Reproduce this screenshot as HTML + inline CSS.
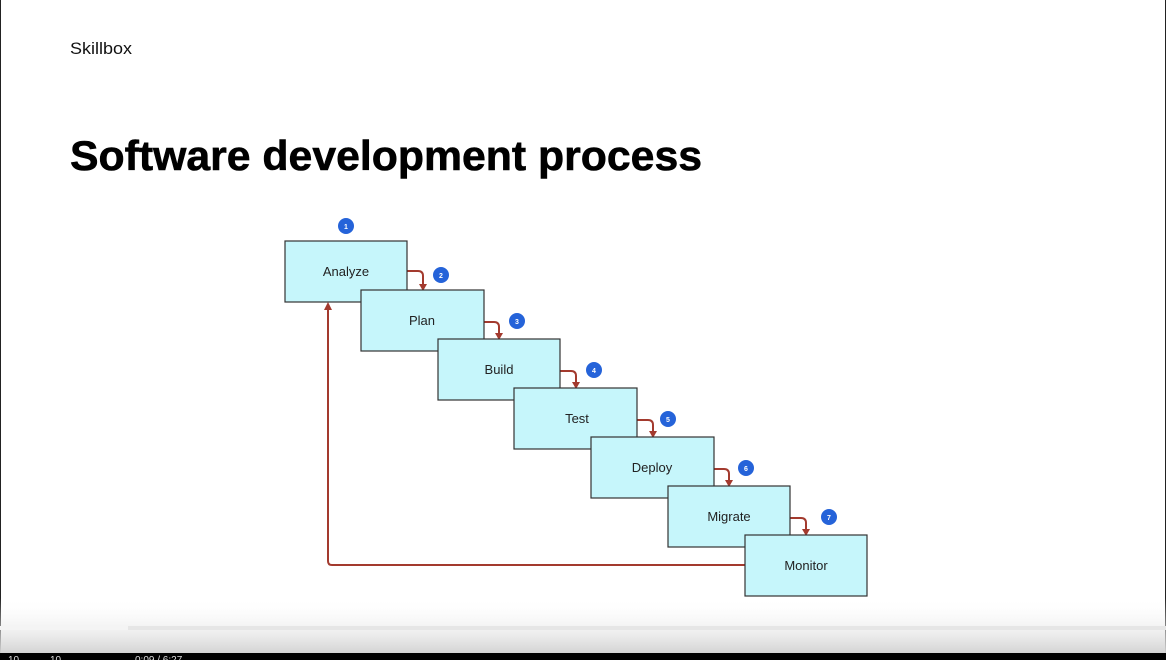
<!DOCTYPE html>
<html><head><style>
html,body{margin:0;padding:0;}
body{width:1166px;height:660px;overflow:hidden;background:#fff;position:relative;font-family:"Liberation Sans",sans-serif;}
</style></head><body>
<svg width="1166" height="660" style="position:absolute;left:0;top:0" xmlns="http://www.w3.org/2000/svg">
<defs>
<linearGradient id="g" x1="0" y1="0" x2="0" y2="1">
<stop offset="0" stop-color="#ffffff" stop-opacity="0"/>
<stop offset="1" stop-color="#d2d2d2"/>
</linearGradient>
</defs>
<rect x="0" y="0" width="1166" height="660" fill="#fff"/>
<line x1="0.5" y1="0" x2="0.5" y2="660" stroke="#222"/>
<line x1="1165.5" y1="0" x2="1165.5" y2="660" stroke="#222"/>
<text x="70" y="54" font-size="17" fill="#111" textLength="62" lengthAdjust="spacingAndGlyphs">Skillbox</text>
<text x="70" y="170" font-size="42" font-weight="bold" fill="#000" stroke="#000" stroke-width="0.6" textLength="632" lengthAdjust="spacingAndGlyphs">Software development process</text>
<g stroke="#a33a2e" stroke-width="2" fill="none">
<path d="M407,271 H418 Q423,271 423,276 V287"/>
<path d="M484,322 H494 Q499,322 499,327 V336"/>
<path d="M560,371 H571 Q576,371 576,376 V385"/>
<path d="M637,420 H648 Q653,420 653,425 V434"/>
<path d="M714,469 H724 Q729,469 729,474 V483"/>
<path d="M790,518 H801 Q806,518 806,523 V532"/>
<path d="M745,565 H332 Q328,565 328,561 V307"/>
</g>
<g fill="#a33a2e">
<path d="M419,284 L427,284 L423,291 z"/>
<path d="M495,333 L503,333 L499,340 z"/>
<path d="M572,382 L580,382 L576,389 z"/>
<path d="M649,431 L657,431 L653,438 z"/>
<path d="M725,480 L733,480 L729,487 z"/>
<path d="M802,529 L810,529 L806,536 z"/>
<path d="M324,310 L332,310 L328,302 z"/>
</g>
<g stroke="#333" stroke-width="1.2" fill="#c6f6fb">
<rect x="285" y="241" width="122" height="61"/>
<rect x="361" y="290" width="123" height="61"/>
<rect x="438" y="339" width="122" height="61"/>
<rect x="514" y="388" width="123" height="61"/>
<rect x="591" y="437" width="123" height="61"/>
<rect x="668" y="486" width="122" height="61"/>
<rect x="745" y="535" width="122" height="61"/>
</g>
<g font-size="13" fill="#222" text-anchor="middle">
<text x="346" y="276">Analyze</text>
<text x="422" y="325">Plan</text>
<text x="499" y="374">Build</text>
<text x="577" y="423">Test</text>
<text x="652" y="472">Deploy</text>
<text x="729" y="521">Migrate</text>
<text x="806" y="570">Monitor</text>
</g>
<g fill="#2563d9">
<circle cx="346" cy="226" r="8"/><circle cx="441" cy="275" r="8"/><circle cx="517" cy="321" r="8"/>
<circle cx="594" cy="370" r="8"/><circle cx="668" cy="419" r="8"/><circle cx="746" cy="468" r="8"/><circle cx="829" cy="517" r="8"/>
</g>
<g fill="#fff" font-size="7" font-weight="bold" text-anchor="middle">
<text x="346" y="229">1</text><text x="441" y="278">2</text><text x="517" y="324">3</text>
<text x="594" y="373">4</text><text x="668" y="422">5</text><text x="746" y="471">6</text><text x="829" y="520">7</text>
</g>
<rect x="0" y="598" width="1166" height="56" fill="url(#g)"/>
<rect x="0" y="626" width="1166" height="4" fill="#e6e6e6"/>
<rect x="0" y="626" width="128" height="4" fill="#f4f4f4"/>
<rect x="0" y="653" width="1166" height="7" fill="#000"/>
<g fill="#ddd" font-size="10">
<text x="8" y="663">10</text><text x="50" y="663">10</text><text x="135" y="663">0:09 / 6:27</text>
</g>
</svg>
</body></html>
